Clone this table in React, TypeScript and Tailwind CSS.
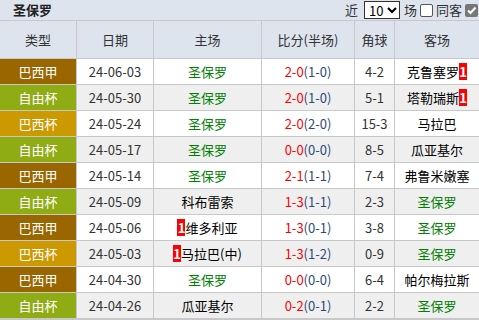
import React from "react";

type Row = {
  type: string;
  date: string;
  home: string;
  homeBadge?: boolean;
  score: string;
  half: string;
  corner: string;
  away: string;
  awayBadge?: boolean;
};

const rows: Row[] = [
  { type: "巴西甲", date: "24-06-03", home: "圣保罗", score: "2-0", half: "(1-0)", corner: "4-2", away: "克鲁塞罗", awayBadge: true },
  { type: "自由杯", date: "24-05-30", home: "圣保罗", score: "2-0", half: "(1-0)", corner: "5-1", away: "塔勒瑞斯", awayBadge: true },
  { type: "巴西杯", date: "24-05-24", home: "圣保罗", score: "2-0", half: "(2-0)", corner: "15-3", away: "马拉巴" },
  { type: "自由杯", date: "24-05-17", home: "圣保罗", score: "0-0", half: "(0-0)", corner: "8-5", away: "瓜亚基尔" },
  { type: "巴西甲", date: "24-05-14", home: "圣保罗", score: "2-1", half: "(1-1)", corner: "7-4", away: "弗鲁米嫩塞" },
  { type: "自由杯", date: "24-05-09", home: "科布雷索", score: "1-3", half: "(1-1)", corner: "2-3", away: "圣保罗" },
  { type: "巴西甲", date: "24-05-06", home: "维多利亚", homeBadge: true, score: "1-3", half: "(0-1)", corner: "3-8", away: "圣保罗" },
  { type: "巴西杯", date: "24-05-03", home: "马拉巴(中)", homeBadge: true, score: "1-3", half: "(1-2)", corner: "0-9", away: "圣保罗" },
  { type: "巴西甲", date: "24-04-30", home: "圣保罗", score: "0-0", half: "(0-0)", corner: "6-4", away: "帕尔梅拉斯" },
  { type: "自由杯", date: "24-04-26", home: "瓜亚基尔", score: "0-2", half: "(0-1)", corner: "2-2", away: "圣保罗" },
];

const typeBg: Record<string, string> = {
  巴西甲: "bg-[#996600]",
  自由杯: "bg-[#8fac15]",
  巴西杯: "bg-[#cc9900]",
};

function Badge() {
  return (
    <span className="inline-flex items-center justify-center bg-[#ff0000] text-white w-[8px] h-[17px] text-[13px] leading-none font-bold">
      1
    </span>
  );
}

function Team({ name, badgeBefore, badgeAfter }: { name: string; badgeBefore?: boolean; badgeAfter?: boolean }) {
  const green = name === "圣保罗";
  return (
    <span className={`inline-flex items-center ${green ? "text-[#008000]" : "text-black"}`}>
      {badgeBefore && <Badge />}
      <span>{name}</span>
      {badgeAfter && <Badge />}
    </span>
  );
}

export default function App() {
  return (
    <div
      className="w-[479px] h-[320px] overflow-hidden bg-[#c8c8c8] text-[12px] text-[#333]"
      style={{ fontFamily: '"Noto Sans CJK SC", "Noto Sans", sans-serif' }}
    >
      <div className="h-[20px] bg-[#dde4ee] flex items-center justify-between pl-[13px] pr-[1px]">
        <span className="font-bold text-[13px] text-[#222]">圣保罗</span>
        <div className="flex items-center text-[13px] text-[#333]">
          <span>近</span>
          <div className="ml-[6px] w-[36px] h-[18px] bg-white border border-[#333] flex items-center justify-between pl-[4px] pr-[2px]">
            <span className="text-[13px] leading-none text-black">10</span>
            <svg width="10" height="8" viewBox="0 0 10 8">
              <path d="M1 2 L5 6 L9 2" stroke="#000" strokeWidth="2.2" fill="none" />
            </svg>
          </div>
          <span className="ml-[4px]">场</span>
          <span className="ml-[3px] w-[13px] h-[13px] bg-white border border-[#555] rounded-[2px]" />
          <span className="ml-[3px]">同客</span>
          <span className="ml-[3px] w-[13px] h-[13px] bg-[#777] rounded-[2px] flex items-center justify-center">
            <svg width="11" height="11" viewBox="0 0 11 11">
              <path d="M2 5.5 L4.5 8 L9.5 2.5" stroke="#fff" strokeWidth="2" fill="none" />
            </svg>
          </span>
        </div>
      </div>
      <div className="mt-px grid grid-cols-[76px_76px_107px_92px_39px_84px] gap-px">
        {["类型", "日期", "主场", "比分(半场)", "角球", "客场"].map((h) => (
          <div key={h} className="h-[37px] bg-[#dde4ee] flex items-center justify-center text-[13px] text-[#333]">
            {h}
          </div>
        ))}
        {rows.map((r, i) => {
          const bg = i % 2 === 0 ? "bg-white" : "bg-[#efefef]";
          return (
            <React.Fragment key={i}>
              <div className={`h-[25px] ${typeBg[r.type]} text-white flex items-center justify-center text-[13px]`}>
                {r.type}
              </div>
              <div className={`h-[25px] ${bg} flex items-center justify-center text-[13px]`}>{r.date}</div>
              <div className={`h-[25px] ${bg} flex items-center justify-center text-[13px]`}>
                <Team name={r.home} badgeBefore={r.homeBadge} />
              </div>
              <div className={`h-[25px] ${bg} flex items-center justify-center text-[13px]`}>
                <span className="text-[#ff0000]">{r.score}</span>
                <span className="text-[#2b4a7a]">{r.half}</span>
              </div>
              <div className={`h-[25px] ${bg} flex items-center justify-center text-[13px]`}>{r.corner}</div>
              <div className={`h-[25px] ${bg} flex items-center justify-center text-[13px]`}>
                <Team name={r.away} badgeAfter={r.awayBadge} />
              </div>
            </React.Fragment>
          );
        })}
      </div>
    </div>
  );
}
